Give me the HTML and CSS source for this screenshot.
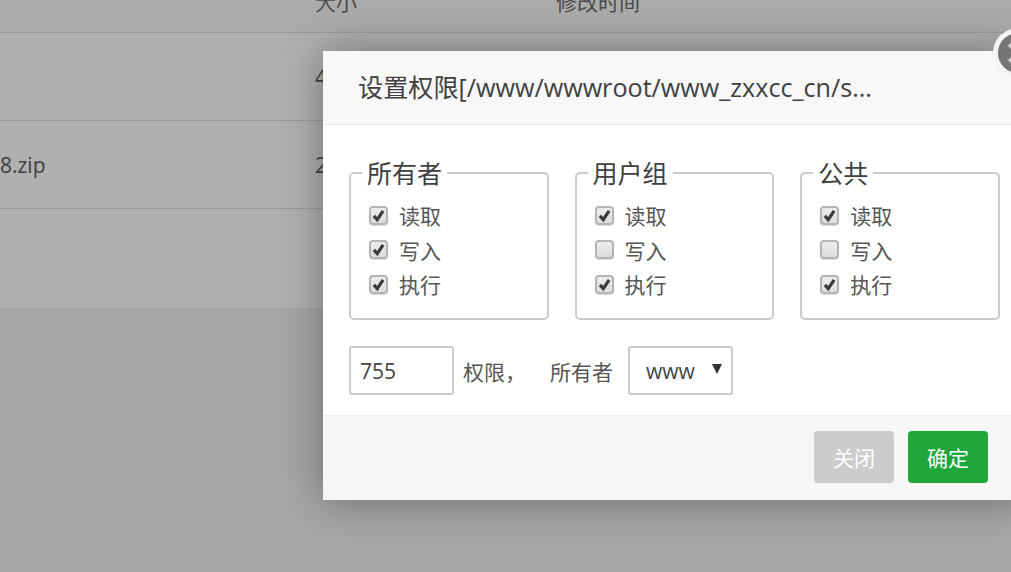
FILE: index.html
```html
<!DOCTYPE html>
<html lang="zh-CN">
<head>
<meta charset="utf-8">
<title>设置权限</title>
<link rel="stylesheet" href="styles.css">
</head>
<body>
<div class="page">
  <div class="table">
    <div class="thead"><span class="c-name"></span><span class="c-size">大小</span><span class="c-time">修改时间</span></div>
    <div class="row"><span class="c-name"></span><span class="c-size">4</span></div>
    <div class="row"><span class="c-name">8.zip</span><span class="c-size">2</span></div>
    <div class="row last"></div>
  </div>
  <div class="modal">
    <a class="close"><svg viewBox="0 0 24 24" width="30" height="30"><path d="M5 5L19 19M19 5L5 19" stroke="#c9c9c9" stroke-width="3.4" fill="none"/></svg></a>
    <div class="m-title">设置权限[/www/wwwroot/www_zxxcc_cn/s...</div>
    <div class="m-body">
      <div class="groups">
        <fieldset class="group">
          <legend>所有者</legend>
          <div class="opt"><span class="cb"><svg viewBox="0 0 18 18"><path d="M3.5 9.5L7.5 14L14.5 3.5" fill="none" stroke="#3a3a3a" stroke-width="3.8"/></svg></span>读取</div>
          <div class="opt"><span class="cb"><svg viewBox="0 0 18 18"><path d="M3.5 9.5L7.5 14L14.5 3.5" fill="none" stroke="#3a3a3a" stroke-width="3.8"/></svg></span>写入</div>
          <div class="opt"><span class="cb"><svg viewBox="0 0 18 18"><path d="M3.5 9.5L7.5 14L14.5 3.5" fill="none" stroke="#3a3a3a" stroke-width="3.8"/></svg></span>执行</div>
        </fieldset>
        <fieldset class="group">
          <legend>用户组</legend>
          <div class="opt"><span class="cb"><svg viewBox="0 0 18 18"><path d="M3.5 9.5L7.5 14L14.5 3.5" fill="none" stroke="#3a3a3a" stroke-width="3.8"/></svg></span>读取</div>
          <div class="opt"><span class="cb"></span>写入</div>
          <div class="opt"><span class="cb"><svg viewBox="0 0 18 18"><path d="M3.5 9.5L7.5 14L14.5 3.5" fill="none" stroke="#3a3a3a" stroke-width="3.8"/></svg></span>执行</div>
        </fieldset>
        <fieldset class="group">
          <legend>公共</legend>
          <div class="opt"><span class="cb"><svg viewBox="0 0 18 18"><path d="M3.5 9.5L7.5 14L14.5 3.5" fill="none" stroke="#3a3a3a" stroke-width="3.8"/></svg></span>读取</div>
          <div class="opt"><span class="cb"></span>写入</div>
          <div class="opt"><span class="cb"><svg viewBox="0 0 18 18"><path d="M3.5 9.5L7.5 14L14.5 3.5" fill="none" stroke="#3a3a3a" stroke-width="3.8"/></svg></span>执行</div>
        </fieldset>
      </div>
      <div class="perm">
        <div class="input">755</div>
        <span class="lbl-a">权限，</span>
        <span class="lbl-b">所有者</span>
        <div class="select">www<span class="arrow"></span></div>
      </div>
    </div>
    <div class="m-foot">
      <button class="btn gray">关闭</button>
      <button class="btn green">确定</button>
    </div>
  </div>
</div>
</body>
</html>
```
FILE: styles.css
```css
* { box-sizing: border-box; }
html, body { margin: 0; padding: 0; }
body {
  font-family: "Open Sans", "Noto Sans CJK SC", sans-serif;
  color: #444;
  background: #a6a6a6;
}
.page { position: relative; width: 1011px; height: 572px; overflow: hidden; }

.table { background: #b0b0b0; font-size: 21px; color: #3f3f3f; }
.thead, .row { display: flex; }
.thead { height: 33px; background: #ababab; border-bottom: 1px solid #9a9a9a; line-height: 22px; color: #4a4a4a; }
.thead span { margin-top: -9px; }
.row { height: 88px; border-bottom: 1px solid #9a9a9a; align-items: center; }
.row.last { height: 99px; border-bottom: 0; }
.c-name { width: 315px; }
.c-size { width: 241px; }

.modal {
  position: absolute;
  left: 323px;
  top: 51px;
  width: 700px;
  height: 449px;
  display: flex;
  flex-direction: column;
  background: #fff;
  box-shadow: 0 0 40px rgba(0, 0, 0, .36);
}
.close {
  position: absolute;
  left: 670px;
  top: -23px;
  width: 50px;
  height: 50px;
  border-radius: 50%;
  background: #757575;
  border: 5px solid #f4f4f4;
  display: flex;
  align-items: center;
  justify-content: center;
}
.m-title {
  height: 74px;
  padding-left: 35px;
  background: #f8f8f8;
  border-bottom: 1px solid #eaeaea;
  font-size: 25.15px;
  line-height: 73px;
  color: #404040;
  white-space: nowrap;
}
.m-body { flex: 1; padding: 31px 26px 0; }
.groups { display: flex; gap: 26px; }
.group {
  flex: none;
  width: 199.6px;
  height: 164px;
  margin: 0;
  padding: 8px 0 0 18px;
  border: 2px solid #cbcbcb;
  border-radius: 5px;
}
.group legend {
  font-size: 25px;
  line-height: 34px;
  padding: 0 5px;
  margin-left: -7px;
  color: #404040;
}
.opt {
  display: flex;
  align-items: center;
  height: 34.5px;
  font-size: 21px;
  color: #555;
}
.cb {
  display: block;
  width: 19px;
  height: 19px;
  margin-right: 11px;
  border: 2px solid #b4b4b4;
  border-radius: 4px;
  background: linear-gradient(#ededed, #dcdcdc);
  box-shadow: 0 1px 1px rgba(0, 0, 0, .15);
}
.cb svg { display: block; width: 15px; height: 15px; }
.perm { display: flex; align-items: center; margin-top: 26px; font-size: 21px; color: #555; }
.input {
  flex: none;
  width: 105px;
  height: 49px;
  padding-left: 9px;
  line-height: 46px;
  border: 2px solid #cbcbcb;
  border-radius: 3px;
  color: #444;
}
.lbl-a { margin-left: 9px; width: 87px; }
.lbl-b { width: 78px; }
.select {
  position: relative;
  flex: none;
  width: 105px;
  height: 49px;
  padding-left: 16px;
  line-height: 47px;
  border: 2px solid #cbcbcb;
  border-radius: 3px;
  color: #444;
}
.arrow {
  position: absolute;
  right: 9px;
  top: 16px;
  border-left: 5px solid transparent;
  border-right: 5px solid transparent;
  border-top: 10px solid #333;
}
.m-foot {
  flex: none;
  height: 85px;
  padding: 15px 0 0 491px;
  display: flex;
  gap: 14px;
  align-items: flex-start;
  background: #f5f7f7;
  border-top: 1px solid #eeeeee;
}
.btn {
  flex: none;
  width: 80px;
  height: 52px;
  border: 0;
  border-radius: 4px;
  font-family: inherit;
  font-size: 21px;
  color: #fff;
  padding: 0;
}
.gray { background: #cbcbcb; }
.green { background: #20a53a; }
```
